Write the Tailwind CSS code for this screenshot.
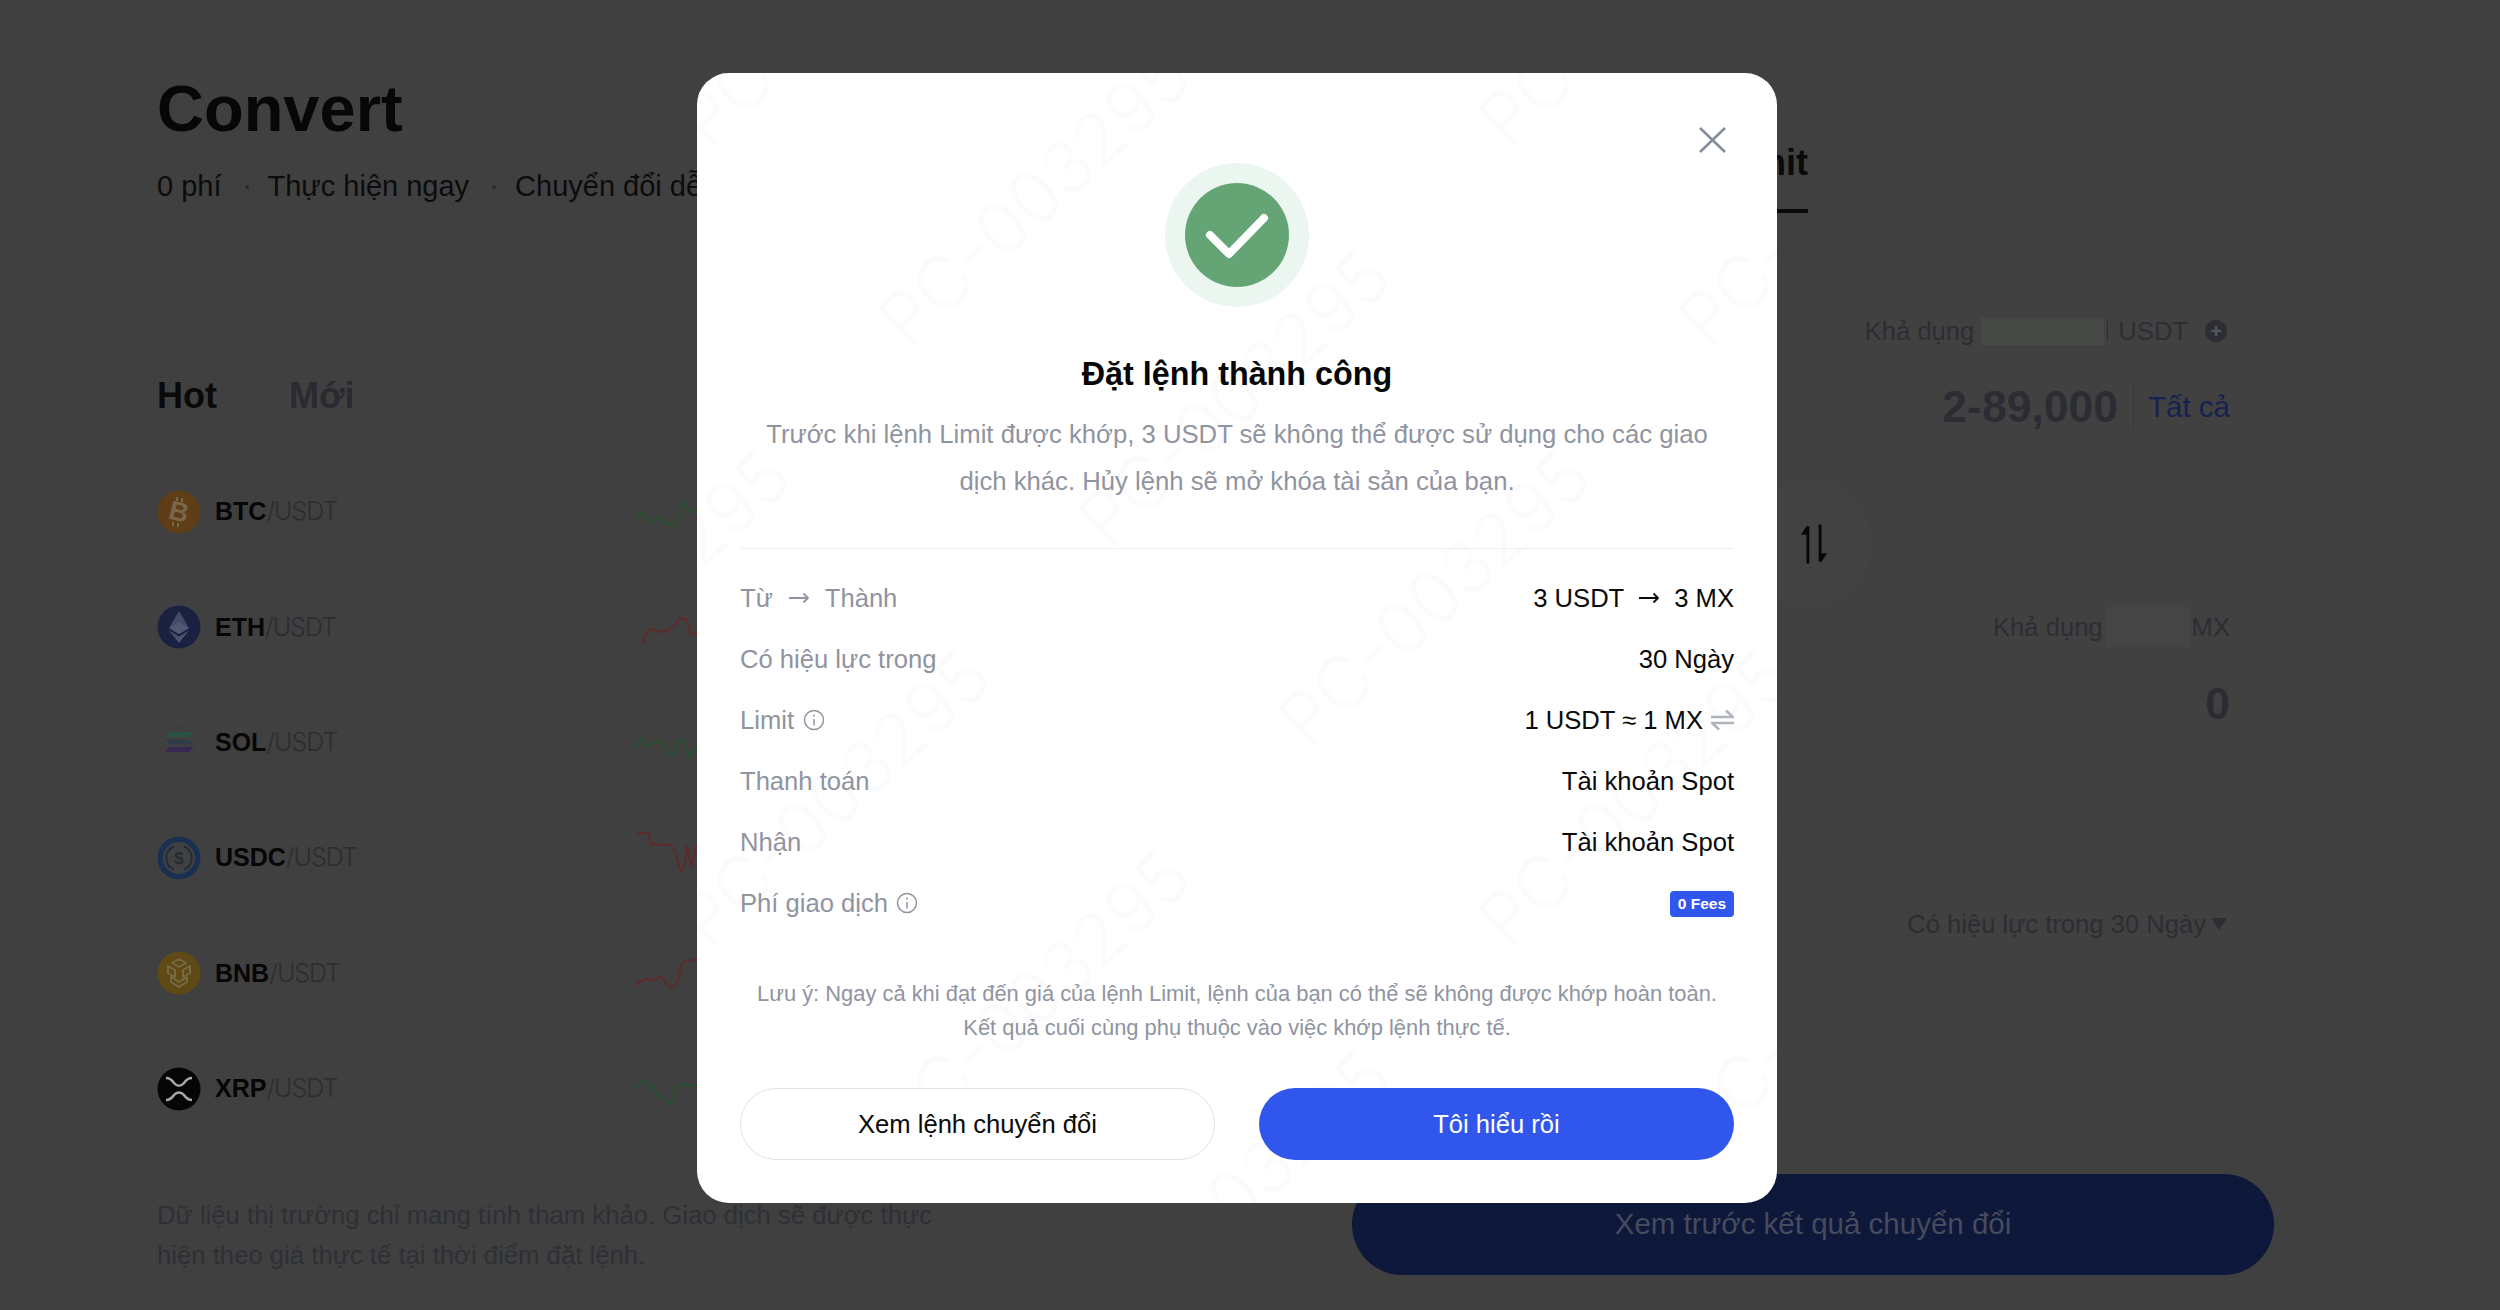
<!DOCTYPE html>
<html lang="vi">
<head>
    <meta charset="UTF-8">
    <meta name="viewport" content="width=device-width, initial-scale=1.0">
    <title>Convert</title>
    <script src="https://cdn.jsdelivr.net/npm/@tailwindcss/browser@4"></script>
</head>
<body class="font-['Liberation_Sans',Arial,sans-serif]">
    <div class="relative w-[2500px] h-[1310px] overflow-hidden bg-[#404040] flex">

        <!-- Left column -->
        <div class="w-[1305px] pl-[157px] pt-[69px] shrink-0">
            <h1 class="h-[80px] leading-[80px] text-[65px] font-bold text-[#070707]">Convert</h1>
            <div class="mt-[18px] h-[40px] flex items-center text-[29px] text-[#0c0c0c]">
                <span>0 phí</span>
                <span class="ml-[23px] mr-[19px] w-[4px] h-[4px] rounded-full bg-[#2a2b2e]"></span>
                <span>Thực hiện ngay</span>
                <span class="ml-[23px] mr-[19px] w-[4px] h-[4px] rounded-full bg-[#2a2b2e]"></span>
                <span>Chuyển đổi dễ dàng</span>
            </div>
            <div class="mt-[167px] h-[44px] flex items-center gap-[72px] text-[36px] font-bold">
                <span class="text-[#0a0a0a]">Hot</span>
                <span class="text-[#2a2b31]">Mới</span>
            </div>

            <!-- Pairs -->
            <div class="mt-[36px] w-[567px]">
                <div class="h-[115.4px] flex items-center">
                    <svg class="w-[44px] h-[44px] shrink-0" viewBox="0 0 44 44">
                        <circle cx="22" cy="22" r="21.5" fill="#5f3e17"/>
                        <text x="22" y="31" text-anchor="middle" font-size="27" font-weight="700" fill="#7a6648" transform="rotate(14 22 22)">B</text>
                        <path d="M20 7v4M25 8v4M16 32v4M21 33v4" stroke="#7a6648" stroke-width="2"/>
                    </svg>
                    <div class="ml-[14px] text-[25px] leading-none"><span class="font-bold text-[#060606]">BTC</span><span class="font-['Inter'] font-light tracking-[-1px] text-[#2c2d33]">/USDT</span></div>
                    <svg class="ml-auto w-[90px] h-[60px]" viewBox="0 0 90 60" fill="none" stroke="#26502f" stroke-width="2" stroke-linejoin="round"><polyline points="0.5,40.5 4,34 8.8,31 12,36 15.7,41.4 20,38 24.9,35 30,40 38.6,43.5 43,38 47,24 50,20.3 53,26 59.3,31 70,25 90,30"/></svg>
                </div>
                <div class="h-[115.4px] flex items-center">
                    <svg class="w-[44px] h-[44px] shrink-0" viewBox="0 0 44 44">
                        <circle cx="22" cy="22" r="21.5" fill="#1b2140"/>
                        <polygon points="22,6 32,23 22,29 12,23" fill="#454b68"/>
                        <polygon points="22,17 32,23 22,29 12,23" fill="#525772"/>
                        <polygon points="12,25.5 22,38 32,25.5 22,31.5" fill="#4c526e"/>
                    </svg>
                    <div class="ml-[14px] text-[25px] leading-none"><span class="font-bold text-[#060606]">ETH</span><span class="font-['Inter'] font-light tracking-[-1px] text-[#2c2d33]">/USDT</span></div>
                    <svg class="ml-auto w-[90px] h-[60px]" viewBox="0 0 90 60" fill="none" stroke="#5e2a2a" stroke-width="2" stroke-linejoin="round"><polyline points="9,47 11,38 16,32 22,34 29,35 35,32 41,29 46,21 52,22 57,36 64,38 90,30"/></svg>
                </div>
                <div class="h-[115.4px] flex items-center">
                    <svg class="w-[44px] h-[44px] shrink-0" viewBox="0 0 44 44">
                        <circle cx="22" cy="22" r="21.5" fill="#404040" stroke="#464646"/>
                        <polygon points="12,12 36,12 32,17 8.500,17" fill="#2b5247"/>
                        <polygon points="8.500,19.500 32,19.500 36,24.500 12,24.500" fill="#323c49"/>
                        <polygon points="12,27 36,27 32,32 8.500,32" fill="#362853"/>
                    </svg>
                    <div class="ml-[14px] text-[25px] leading-none"><span class="font-bold text-[#060606]">SOL</span><span class="font-['Inter'] font-light tracking-[-1px] text-[#2c2d33]">/USDT</span></div>
                    <svg class="ml-auto w-[90px] h-[60px]" viewBox="0 0 90 60" fill="none" stroke="#26502f" stroke-width="2" stroke-linejoin="round"><polyline points="0.500,36 5,30 9,26 12,33 16,34 22,29 28,31 33,37 38,44 42,36 45,29 50,28 53,38 56,45 60,38 63,34 70,36 90,30"/></svg>
                </div>
                <div class="h-[115.4px] flex items-center">
                    <svg class="w-[44px] h-[44px] shrink-0" viewBox="0 0 44 44" fill="none">
                        <circle cx="22" cy="22" r="21.500" fill="#1a3050"/>
                        <circle cx="22" cy="22" r="16" fill="#3f4145"/>
                        <path d="M17 10.500a12.500 12.500 0 0 0 0 23M27 10.500a12.500 12.500 0 0 1 0 23" stroke="#272a31" stroke-width="2"/>
                        <text x="22" y="28" text-anchor="middle" font-size="17" font-weight="700" fill="#272a31">$</text>
                    </svg>
                    <div class="ml-[14px] text-[25px] leading-none"><span class="font-bold text-[#060606]">USDC</span><span class="font-['Inter'] font-light tracking-[-1px] text-[#2c2d33]">/USDT</span></div>
                    <svg class="ml-auto w-[90px] h-[60px]" viewBox="0 0 90 60" fill="none" stroke="#5e2a2a" stroke-width="2" stroke-linejoin="round"><polyline points="3,5 15,5 17,16 37,17 41,22 45,38 48,44 52,28 53,18 57,38 60,28 62,18 72,20 90,24"/></svg>
                </div>
                <div class="h-[115.4px] flex items-center">
                    <svg class="w-[44px] h-[44px] shrink-0" viewBox="0 0 44 44" fill="none">
                        <circle cx="22" cy="22" r="21.500" fill="#5f4a16"/>
                        <path d="M22 8l7 4-7 4-7-4zM11 15l7 4v7l-7-4zM33 15l-7 4v7l7-4zM22 36l-8-5v-5l8 5 8-5v5z" stroke="#766a42" stroke-width="2" stroke-linejoin="round"/>
                    </svg>
                    <div class="ml-[14px] text-[25px] leading-none"><span class="font-bold text-[#060606]">BNB</span><span class="font-['Inter'] font-light tracking-[-1px] text-[#2c2d33]">/USDT</span></div>
                    <svg class="ml-auto w-[90px] h-[60px]" viewBox="0 0 90 60" fill="none" stroke="#5e2a2a" stroke-width="2" stroke-linejoin="round"><polyline points="3,43 5,39 12,36 20,37 28,33 33,42 39,45 44,38 47,23 51,17 56,18 64,15 90,20"/></svg>
                </div>
                <div class="h-[115.4px] flex items-center">
                    <svg class="w-[44px] h-[44px] shrink-0" viewBox="0 0 44 44" fill="none">
                        <circle cx="22" cy="22" r="21.500" fill="#060606"/>
                        <path d="M9 11c4 0 6 2 8 5 3 3.500 7 3.500 10 0 2-3 4-5 8-5M9 33c4 0 6-2 8-5 3-3.500 7-3.500 10 0 2 3 4 5 8 5" stroke="#a8a8a8" stroke-width="2.500"/>
                    </svg>
                    <div class="ml-[14px] text-[25px] leading-none"><span class="font-bold text-[#060606]">XRP</span><span class="font-['Inter'] font-light tracking-[-1px] text-[#2c2d33]">/USDT</span></div>
                    <svg class="ml-auto w-[90px] h-[60px]" viewBox="0 0 90 60" fill="none" stroke="#26502f" stroke-width="2" stroke-linejoin="round"><polyline points="0.500,29 5,26 9,21 13,25 18,27 25,37 32,42 36,46 39,39 43,28 47,25 52,27 62,26 90,28"/></svg>
                </div>
            </div>

            <p class="mt-[49px] w-[800px] text-[25.7px] leading-[40px] text-[#2e3036]">Dữ liệu thị trường chỉ mang tính tham khảo. Giao dịch sẽ được thực hiện theo giá thực tế tại thời điểm đặt lệnh.</p>
        </div>

        <!-- Right panel -->
        <div class="relative mt-[68px] w-[1012px] h-[1230px] pl-[46px] pr-[42px] rounded-[24px] border border-[#424242] bg-[#404040]">
            <div class="h-[144px] flex items-start">
                <div class="ml-[370px] h-[144px] pt-[72px] text-[36px] leading-[44px] font-bold text-[#0a0a0a] border-b-[4px] border-[#0a0a0a]">Limit</div>
            </div>

            <div class="mt-[54px] h-[255px] rounded-[24px] bg-[#414141] pt-[44px] pr-[47px] flex flex-col items-end">
                <div class="h-[40px] flex items-center text-[25.6px] text-[#2d2e34]">
                    <span>Khả dụng</span>
                    <span class="ml-[7px] w-[123px] h-[27px] bg-[#464846]"></span>
                    <span class="ml-[3px] mr-[10px] h-[20px] w-[1px] bg-[#2d2e34]"></span>
                    <span>USDT</span>
                    <span class="ml-[17px] w-[22px] h-[22px] rounded-full bg-[#2d2e34] text-[#55565b] flex items-center justify-center text-[20px] leading-none font-bold">+</span>
                </div>
                <div class="mt-[28px] h-[56px] flex items-center -mr-[3px]">
                    <span class="text-[44.5px] font-bold text-[#2c2d33]">2-89,000</span>
                    <span class="ml-[15px] mr-[14px] h-[48px] w-[1px] bg-[#3a3a3a]"></span>
                    <span class="text-[29.5px] font-medium text-[#16224f]">Tất cả</span>
                </div>
            </div>

            <div class="absolute left-[435px] top-[409px] w-[131px] h-[131px] pl-[14px] rounded-full bg-[#424242] flex items-center justify-center">
                <svg class="w-[28px] h-[40px]" viewBox="0 0 30 42" fill="#060606"><path d="M7 2v40h3V2zM7 2L1 11h6zM20 0v40h3V0zM23 40l6-9h-6z"/></svg>
            </div>

            <div class="mt-[43px] h-[252px] rounded-[24px] bg-[#414141] pt-[42px] pr-[44px] flex flex-col items-end">
                <div class="h-[40px] flex items-center text-[25.6px] text-[#2d2e34]">
                    <span>Khả dụng</span>
                    <span class="ml-[4px] mr-[3px] w-[82px] h-[40px] bg-[#454545]"></span>
                    <span>MX</span>
                </div>
                <div class="mt-[29px] h-[56px] flex items-center text-[44.5px] font-bold text-[#2c2d33]">0</div>
            </div>

            <div class="mt-[43px] h-[257px] rounded-[24px] bg-[#414141] pt-[44px] pr-[47px] flex justify-end">
                <div class="h-[40px] flex items-center gap-[5px] text-[25.6px] text-[#2d2e34]">
                    <span>Có hiệu lực trong 30 Ngày</span>
                    <svg class="w-[16px] h-[12px]" viewBox="0 0 16 12" fill="#2d2e34"><path d="M0 0h16l-8 12z"/></svg>
                </div>
            </div>

            <div class="mt-[57px] h-[101px] rounded-full bg-[#0d183a] flex items-center justify-center text-[29.5px] text-[#464b5d]">Xem trước kết quả chuyển đổi</div>
        </div>

        <!-- Success dialog -->
        <div class="absolute left-[697px] top-[73px] w-[1080px] h-[1130px] rounded-[32px] bg-white overflow-hidden px-[43px] pt-[90px]">
            <!-- account watermark, one diagonal per lattice point -->
            <div class="absolute left-[25px] top-[15px] right-[-25px] bottom-[-15px] pointer-events-none text-[#fbfbfb] text-[72px] font-['Inter'] font-light leading-none whitespace-nowrap">
                <span class="absolute origin-bottom-left rotate-[-43deg] left-[-7px] top-[-2px]">PC-003295</span>
                <span class="absolute origin-bottom-left rotate-[-43deg] left-[193px] top-[198px]">PC-003295</span>
                <span class="absolute origin-bottom-left rotate-[-43deg] left-[393px] top-[398px]">PC-003295</span>
                <span class="absolute origin-bottom-left rotate-[-43deg] left-[593px] top-[598px]">PC-003295</span>
                <span class="absolute origin-bottom-left rotate-[-43deg] left-[793px] top-[798px]">PC-003295</span>
                <span class="absolute origin-bottom-left rotate-[-43deg] left-[993px] top-[998px]">PC-003295</span>
                <span class="absolute origin-bottom-left rotate-[-43deg] left-[593px] top-[-202px]">PC-003295</span>
                <span class="absolute origin-bottom-left rotate-[-43deg] left-[793px] top-[-2px]">PC-003295</span>
                <span class="absolute origin-bottom-left rotate-[-43deg] left-[993px] top-[198px]">PC-003295</span>
                <span class="absolute origin-bottom-left rotate-[-43deg] left-[-207px] top-[598px]">PC-003295</span>
                <span class="absolute origin-bottom-left rotate-[-43deg] left-[-7px] top-[798px]">PC-003295</span>
                <span class="absolute origin-bottom-left rotate-[-43deg] left-[193px] top-[998px]">PC-003295</span>
                <span class="absolute origin-bottom-left rotate-[-43deg] left-[393px] top-[1198px]">PC-003295</span>
            </div>

            <div class="relative">
                <svg class="absolute right-[8px] top-[-36px] w-[27px] h-[26px]" viewBox="0 0 27 26" fill="none" stroke="#858c99" stroke-width="2.500"><path d="M1 1l25 24M26 1L1 25"/></svg>

                <div class="mx-auto w-[144px] h-[144px] rounded-full bg-[#ecf6f0] flex items-center justify-center">
                    <div class="w-[104px] h-[104px] rounded-full bg-[#65a575] flex items-center justify-center">
                        <svg class="w-[104px] h-[104px]" viewBox="0 0 104 104" fill="none" stroke="#fff" stroke-width="8" stroke-linecap="round" stroke-linejoin="round"><path d="M25 52l19 19 35-36"/></svg>
                    </div>
                </div>
                <h2 class="mt-[45px] h-[44px] leading-[44px] text-center text-[32.3px] font-bold text-[#060606]">Đặt lệnh thành công</h2>
                <p class="mt-[15px] text-center text-[25.7px] leading-[47px] text-[#8f94a0]">Trước khi lệnh Limit được khớp, 3 USDT sẽ không thể được sử dụng cho các giao<br>dịch khác. Hủy lệnh sẽ mở khóa tài sản của bạn.</p>

                <div class="mt-[43px] h-[1px] bg-[#eeeff1]"></div>

                <div class="mt-[19px] text-[25.6px] text-[#8f94a0]">
                    <div class="h-[61px] flex items-center justify-between">
                        <div class="flex items-center gap-[16px]">
                            <span>Từ</span>
                            <svg class="w-[20px] h-[14px]" viewBox="0 0 20 14" fill="none" stroke="#8f94a0" stroke-width="1.800"><path d="M0 7h19M14.500 2.500L19 7l-4.500 4.500"/></svg>
                            <span>Thành</span>
                        </div>
                        <div class="flex items-center gap-[15px] text-[#0a0a0a]">
                            <span>3 USDT</span>
                            <svg class="w-[20px] h-[14px]" viewBox="0 0 20 14" fill="none" stroke="#0a0a0a" stroke-width="1.800"><path d="M0 7h19M14.500 2.500L19 7l-4.500 4.500"/></svg>
                            <span>3 MX</span>
                        </div>
                    </div>
                    <div class="h-[61px] flex items-center justify-between">
                        <span>Có hiệu lực trong</span>
                        <span class="text-[#0a0a0a]">30 Ngày</span>
                    </div>
                    <div class="h-[61px] flex items-center justify-between">
                        <div class="flex items-center gap-[9px]">
                            <span>Limit</span>
                            <svg class="w-[22px] h-[22px]" viewBox="0 0 22 22" fill="none" stroke="#8f94a0" stroke-width="1.500"><circle cx="11" cy="11" r="9.500"/><path d="M11 10v6.500M11 5.500v2"/></svg>
                        </div>
                        <div class="flex items-center gap-[8px] text-[#0a0a0a]">
                            <span>1 USDT ≈ 1 MX</span>
                            <svg class="w-[23px] h-[22px]" viewBox="0 0 23 22" fill="none" stroke="#b0b4bd" stroke-width="2.500"><path d="M0 8h22L15 1.500M23 14H1l7 6.500"/></svg>
                        </div>
                    </div>
                    <div class="h-[61px] flex items-center justify-between">
                        <span>Thanh toán</span>
                        <span class="text-[#0a0a0a]">Tài khoản Spot</span>
                    </div>
                    <div class="h-[61px] flex items-center justify-between">
                        <span>Nhận</span>
                        <span class="text-[#0a0a0a]">Tài khoản Spot</span>
                    </div>
                    <div class="h-[61px] flex items-center justify-between">
                        <div class="flex items-center gap-[8px]">
                            <span>Phí giao dịch</span>
                            <svg class="w-[22px] h-[22px]" viewBox="0 0 22 22" fill="none" stroke="#8f94a0" stroke-width="1.500"><circle cx="11" cy="11" r="9.500"/><path d="M11 10v6.500M11 5.500v2"/></svg>
                        </div>
                        <span class="w-[64px] h-[26px] rounded-[4px] bg-[#3156eb] text-white text-[15.5px] font-bold flex items-center justify-center">0 Fees</span>
                    </div>
                </div>

                <p class="mt-[43px] text-center text-[21.9px] leading-[34px] text-[#8f94a0]">Lưu ý: Ngay cả khi đạt đến giá của lệnh Limit, lệnh của bạn có thể sẽ không được khớp hoàn toàn.<br>Kết quả cuối cùng phụ thuộc vào việc khớp lệnh thực tế.</p>

                <div class="mt-[43px] flex gap-[44px]">
                    <button class="w-[475px] h-[72px] rounded-full border border-[#dfe1e5] bg-white text-[25.6px] text-[#0a0a0a]">Xem lệnh chuyển đổi</button>
                    <button class="w-[475px] h-[72px] rounded-full bg-[#3156eb] text-[25.6px] text-white">Tôi hiểu rồi</button>
                </div>
            </div>
        </div>
    </div>
</body>
</html>
